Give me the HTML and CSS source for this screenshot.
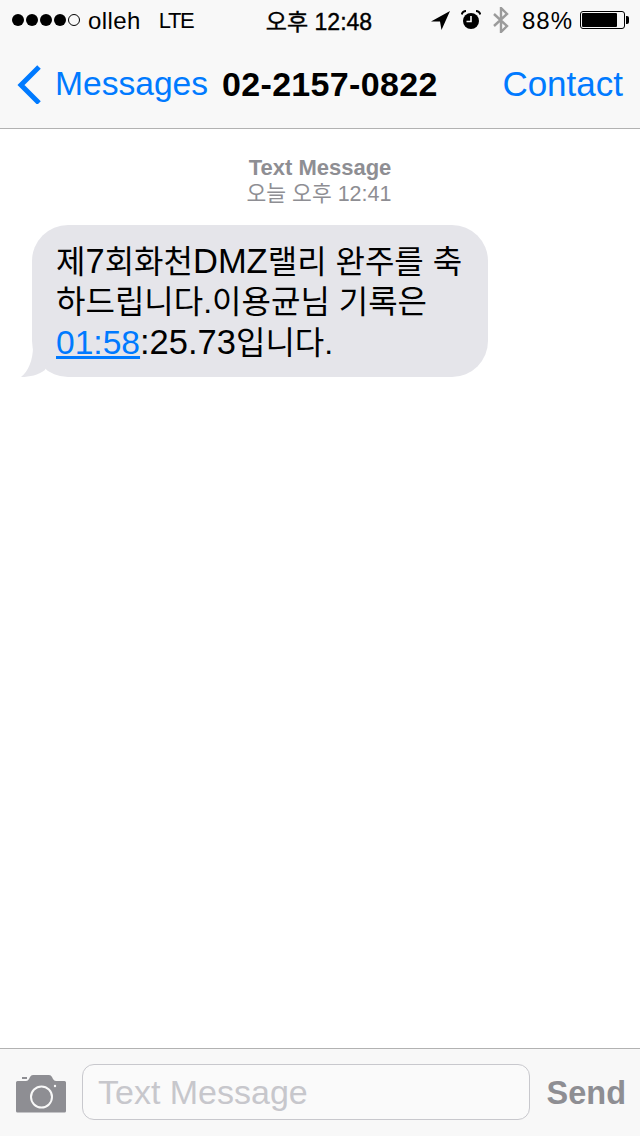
FILE: index.html
```html
<!DOCTYPE html>
<html lang="ko">
<head>
    <meta charset="UTF-8">
    <title>Messages</title>
    <meta name="viewport" content="width=device-width, initial-scale=1.0">
    <link rel="stylesheet" href="styles.css">
</head>
<body>
    <div class="screen">
        <!-- status bar + nav -->
        <header class="top">
            <div class="status">
                <div class="status-left">
                    <span class="dots">
                        <i class="dot"></i><i class="dot"></i><i class="dot"></i><i class="dot"></i><i class="dot dot-empty"></i>
                    </span>
                    <span class="carrier">olleh</span>
                    <span class="network">LTE</span>
                </div>
                <div class="status-time">오후 12:48</div>
                <div class="status-right">
                    <svg class="ico-loc" width="19" height="19" viewBox="0 0 19 19"><path d="M19 0 L0 10.5 L9 10.5 L10.5 19 Z" fill="#000"/></svg>
                    <svg class="ico-alarm" width="20" height="20" viewBox="0 0 20 20">
                        <circle cx="10" cy="11" r="8" fill="#000"/>
                        <path d="M10 6 V11.5 H5.5" fill="none" stroke="#f8f8f8" stroke-width="1.6"/>
                        <path d="M0.8 4.5 Q1.5 1 5 1 M15 1 Q18.5 1 19.2 4.5" fill="none" stroke="#000" stroke-width="2"/>
                    </svg>
                    <svg class="ico-bt" width="16" height="26" viewBox="0 0 16 26"><path d="M1 7 L14 19 L8 25 V1 L14 7 L1 19" fill="none" stroke="#9b9b9b" stroke-width="2.4"/></svg>
                    <span class="battery-pct">88%</span>
                    <span class="battery"><span class="battery-fill"></span></span>
                    <span class="battery-tip"></span>
                </div>
            </div>
            <nav class="nav">
                <a class="back">
                    <svg width="26" height="40" viewBox="0 0 26 40"><path d="M23 3 L5 21 L23 39" fill="none" stroke="#007aff" stroke-width="5"/></svg>
                    <span>Messages</span>
                </a>
                <div class="nav-title">02-2157-0822</div>
                <a class="contact">Contact</a>
            </nav>
        </header>

        <main class="thread">
            <div class="stamp">
                <div class="stamp-type">Text Message</div>
                <div class="stamp-time">오늘 오후 12:41</div>
            </div>
            <div class="bubble">
                제<span class="lat">7</span>회화천<span class="lat">DMZ</span>랠리 완주를 축<br>하드립니다.이용균님 기록은<br><a class="link">01:58</a><span class="lat">:25.73</span>입니다.
                <svg class="tail" width="31" height="30" viewBox="0 0 31 30"><path d="M14 0 C14 13 9 25 2 30 C11 30 19 28 26 23 L31 0 Z" fill="#e5e5ea"/></svg>
            </div>
        </main>

        <footer class="composer">
            <svg class="camera" width="50" height="38" viewBox="0 0 50 38">
                <path fill-rule="evenodd" fill="#8e8e93" d="M1.5 6 H10 Q12 6 13 4 L14 2 Q15 0 17 0 H33 Q35 0 36 2 L37 4 Q38 6 40 6 H48.5 Q50 6 50 7.5 V36 Q50 37.5 48.5 37.5 H1.5 Q0 37.5 0 36 V7.5 Q0 6 1.5 6 Z M25.5 10.5 A11.5 11.5 0 1 0 25.5 33.5 A11.5 11.5 0 1 0 25.5 10.5 Z M25.5 12.5 A9.5 9.5 0 1 1 25.5 31.5 A9.5 9.5 0 1 1 25.5 12.5 Z"/>
                <rect x="6" y="2" width="5" height="2" fill="#8e8e93"/>
                <circle cx="39" cy="11" r="1.2" fill="#f8f8f8"/>
            </svg>
            <div class="input">Text Message</div>
            <div class="send">Send</div>
        </footer>
    </div>
</body>
</html>
```

FILE: styles.css
```css
html, body {
    margin: 0;
    padding: 0;
}
body {
    font-family: "Liberation Sans", "Noto Sans CJK KR", sans-serif;
    background: #fff;
    color: #000;
}
.screen {
    width: 640px;
    height: 1136px;
    display: flex;
    flex-direction: column;
    overflow: hidden;
}

.top {
    height: 128px;
    background: #f8f8f8;
    border-bottom: 1px solid #b2b2b2;
    flex: none;
}
.status {
    height: 40px;
    display: flex;
    justify-content: space-between;
    align-items: center;
    padding: 0 11px 0 12px;
    font-size: 24px;
    position: relative;
}
.status-left {
    display: flex;
    align-items: center;
}
.dots {
    display: flex;
    gap: 2px;
    margin-right: 8px;
}
.dot {
    width: 12px;
    height: 12px;
    border-radius: 50%;
    background: #000;
    box-sizing: border-box;
}
.dot-empty {
    background: none;
    border: 1px solid #000;
}
.carrier {
    letter-spacing: 0.4px;
    padding-top: 2px;
}
.network {
    margin-left: 18px;
    padding-top: 2px;
    font-size: 22px;
    letter-spacing: -1.4px;
}
.status-time {
    position: absolute;
    left: 0;
    right: 2px;
    top: 3px;
    text-align: center;
    font-size: 23px;
    -webkit-text-stroke: 0.4px #000;
    pointer-events: none;
}
.status-right {
    display: flex;
    align-items: center;
}
.ico-loc { margin-right: 11px; }
.ico-alarm { margin-right: 12px; }
.ico-bt { margin-right: 13px; }
.battery-pct {
    letter-spacing: 1px;
    margin-right: 7px;
    padding-top: 2px;
}
.battery {
    width: 41px;
    height: 14px;
    border: 1px solid #000;
    border-radius: 3px;
    padding: 1px;
    display: block;
}
.battery-fill {
    display: block;
    width: 35px;
    height: 14px;
    background: #000;
    border-radius: 1px;
}
.battery-tip {
    width: 3px;
    height: 8px;
    background: #000;
    border-radius: 0 2px 2px 0;
    margin-left: 1px;
}

.nav {
    height: 88px;
    display: flex;
    align-items: center;
    justify-content: space-between;
    padding: 0 17px 0 16px;
    font-size: 34px;
    position: relative;
}
.back {
    display: flex;
    align-items: center;
    gap: 13px;
    font-size: 33.6px;
    color: #007aff;
}
.contact {
    color: #007aff;
    font-size: 35px;
}
.nav-title {
    position: absolute;
    left: 222px;
    font-weight: bold;
    font-size: 34px;
    letter-spacing: 0.33px;
}

.thread {
    flex: 1;
    background: #fff;
}
.stamp {
    text-align: center;
    color: #8e8e93;
    font-size: 22px;
    line-height: 26px;
    padding-top: 26px;
}
.stamp-type {
    font-weight: bold;
}
.stamp-time {
    font-size: 21.5px;
    padding-right: 2px;
}
.bubble {
    position: relative;
    width: 456px;
    height: 152px;
    box-sizing: border-box;
    margin: 18px 0 0 32px;
    padding: 16px 0 0 24px;
    background: #e5e5ea;
    border-radius: 36px;
    font-size: 32px;
    line-height: 40px;
}
.lat {
    font-size: 34.5px;
}
.link {
    color: #007aff;
    font-size: 33.6px;
    text-decoration: underline;
}
.tail {
    position: absolute;
    left: -13px;
    bottom: 0;
}

.composer {
    height: 87px;
    flex: none;
    background: #f8f8f8;
    border-top: 1px solid #b2b2b2;
    display: flex;
    align-items: center;
    padding: 0 14px 0 16px;
}
.camera {
    flex: none;
    margin-top: 2px;
}
.input {
    flex: none;
    width: 431px;
    height: 54px;
    margin-left: 16px;
    margin-bottom: 1px;
    padding-left: 15px;
    border: 1px solid #c8c8cd;
    border-radius: 12px;
    background: #fafafa;
    color: #c7c7cc;
    font-size: 34px;
    line-height: 55px;
}
.send {
    margin-left: auto;
    padding-top: 2px;
    font-size: 32.5px;
    font-weight: bold;
    color: #8e8e93;
}
```
